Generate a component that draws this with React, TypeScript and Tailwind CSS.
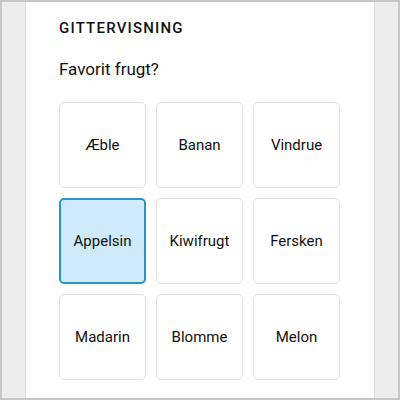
const fruits = ["Æble", "Banan", "Vindrue", "Appelsin", "Kiwifrugt", "Fersken", "Madarin", "Blomme", "Melon"];

export default function App() {
  const selected = "Appelsin";

  return (
    <div
      className="w-[400px] h-[400px] overflow-hidden border-2 border-[#c6c6c6] bg-[#ececec] flex justify-center"
      style={{ fontFamily: "Roboto, 'Liberation Sans', sans-serif" }}
    >
      <div className="w-[350px] h-full bg-white border-x border-[#dcdcdc] pl-[33px] pr-[34px] pt-[16px]">
        <h2 className="text-[15px] leading-5 font-medium tracking-[1.2px] text-[#111]">GITTERVISNING</h2>
        <p className="mt-[19px] text-[17px] leading-6 text-[#111]">Favorit frugt?</p>
        <div className="mt-[21px] grid grid-cols-3 gap-[10px]">
          {fruits.map((f) => (
            <div
              key={f}
              className={
                f === selected
                  ? "h-[86px] flex items-center justify-center rounded-[5px] border-2 border-[#2893c6] bg-[#cfeafb] text-[15px] text-[#111]"
                  : "h-[86px] flex items-center justify-center rounded-[5px] border border-[#e2e2e2] bg-white text-[15px] text-[#111]"
              }
            >
              {f}
            </div>
          ))}
        </div>
      </div>
    </div>
  );
}
